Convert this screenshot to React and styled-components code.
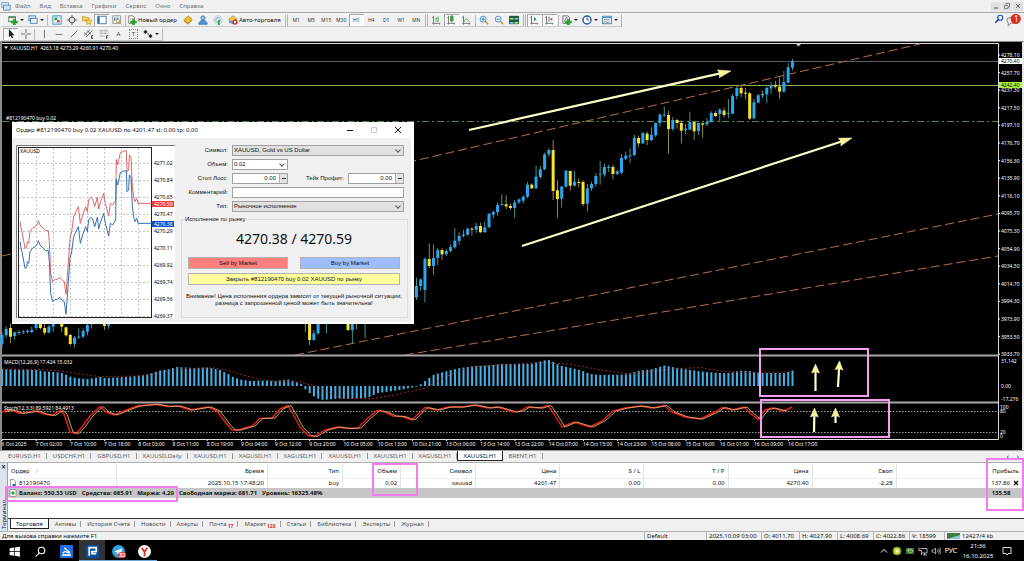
import React from 'react'
import styled, { createGlobalStyle, css } from 'styled-components'

const STEP = 4.273
const barX = (k) => 416.4 + STEP * k

// [up, high, top, bottom, low], three units to a pixel, first bar at index 0
const candles = [
  [1, 713, 738, 772, 780], [1, 716, 718, 738, 752], [1, 652, 657, 750, 787], [0, 610, 657, 678, 684],
  [1, 613, 654, 678, 705], [1, 625, 630, 654, 675], [0, 625, 630, 643, 660], [1, 628, 633, 643, 648],
  [1, 613, 621, 633, 637], [1, 564, 602, 622, 626], [1, 577, 588, 603, 613], [1, 569, 584, 588, 592],
  [1, 563, 566, 584, 588], [0, 562, 566, 569, 586], [1, 548, 558, 569, 579], [0, 548, 558, 577, 578],
  [1, 545, 562, 576, 579], [1, 520, 521, 562, 563], [1, 512, 516, 524, 535], [1, 488, 495, 516, 527],
  [1, 463, 492, 495, 497], [0, 466, 493, 499, 507], [0, 492, 498, 504, 510], [1, 480, 487, 504, 533],
  [1, 476, 478, 487, 492], [1, 466, 470, 482, 490], [1, 425, 434, 470, 474], [0, 430, 434, 445, 447],
  [1, 377, 410, 445, 447], [1, 377, 388, 411, 416], [1, 338, 343, 388, 390], [1, 325, 330, 343, 350],
  [0, 300, 330, 453, 480], [0, 421, 451, 477, 533], [1, 438, 440, 476, 502], [1, 390, 392, 440, 442],
  [0, 392, 393, 437, 452], [1, 393, 425, 437, 440], [0, 415, 426, 429, 441], [0, 421, 426, 492, 498],
  [1, 432, 445, 491, 515], [1, 425, 432, 445, 452], [1, 400, 408, 432, 440], [1, 363, 401, 404, 434],
  [1, 371, 381, 403, 410], [1, 374, 381, 384, 395], [0, 374, 381, 402, 418], [1, 390, 394, 402, 405],
  [1, 342, 354, 398, 403], [1, 335, 347, 356, 360], [1, 325, 346, 349, 369], [1, 284, 293, 345, 348],
  [0, 287, 294, 310, 322], [1, 276, 279, 310, 312], [0, 275, 281, 300, 315], [1, 262, 284, 300, 303],
  [1, 247, 249, 286, 291], [1, 220, 224, 249, 260], [1, 200, 224, 226, 230], [0, 213, 225, 267, 341],
  [1, 231, 240, 267, 272], [0, 236, 240, 249, 266], [0, 241, 249, 272, 310], [1, 252, 266, 270, 283],
  [1, 215, 246, 269, 271], [0, 245, 246, 274, 300], [1, 248, 249, 273, 285], [0, 248, 250, 254, 293],
  [1, 235, 246, 253, 258], [1, 214, 219, 246, 248], [0, 213, 219, 228, 231], [1, 205, 209, 222, 247],
  [0, 203, 212, 225, 232], [1, 177, 219, 222, 235], [1, 162, 168, 221, 223], [1, 140, 144, 168, 178],
  [0, 138, 144, 160, 172], [0, 144, 158, 160, 178], [0, 156, 160, 236, 240], [1, 176, 187, 235, 238],
  [1, 162, 166, 188, 189], [1, 153, 162, 166, 174], [1, 140, 144, 163, 190], [1, 126, 135, 145, 161],
  [0, 122, 135, 140, 146], [0, 113, 140, 155, 177], [1, 93, 126, 155, 157], [1, 70, 82, 128, 129],
  [1, 57, 63, 83, 90],
].map((c, i) => [i, ...c])

// older bars, with their own index
const oldCandles = [
  [-97, 1, 874, 885, 913, 926], [-96, 1, 860, 867, 886, 893], [-95, 0, 850, 864, 890, 910],
  [-94, 1, 875, 877, 888, 900], [-93, 1, 870, 876, 878, 885], [-92, 1, 870, 874, 877, 882],
  [-91, 1, 868, 873, 876, 880], [-90, 1, 860, 870, 876, 880], [-89, 1, 840, 850, 864, 870],
  [-88, 0, 840, 850, 864, 868], [-87, 0, 850, 864, 878, 885], [-86, 1, 855, 860, 878, 880],
  [-85, 1, 840, 850, 860, 876], [-83, 0, 840, 850, 860, 876], [-82, 0, 860, 862, 886, 890],
  [-81, 0, 882, 885, 912, 917], [-80, 1, 888, 893, 912, 922], [-79, 1, 865, 890, 893, 896],
  [-78, 1, 865, 873, 890, 894], [-77, 1, 850, 855, 875, 886], [-76, 1, 840, 850, 853, 865],
  [-73, 0, 850, 852, 858, 870], [-72, 1, 850, 852, 857, 866], [-26, 0, 840, 848, 852, 876],
  [-25, 0, 850, 852, 900, 915], [-24, 1, 870, 880, 900, 902], [-23, 1, 850, 852, 880, 885],
  [-21, 1, 840, 845, 850, 880], [-16, 0, 850, 852, 870, 873], [-15, 1, 850, 852, 870, 910],
  [-14, 0, 840, 845, 850, 868], [-12, 1, 840, 845, 850, 894],
]

const macd = [
  [0, 369], [20, 369.5], [38, 370], [45, 371.5], [55, 372], [62, 373], [67, 375], [71, 377], [80, 378.5],
  [88, 379], [93, 378], [100, 377], [105, 378], [125, 377], [145, 375], [152, 373], [160, 370.5], [170, 369],
  [177, 367], [195, 368], [208, 367.5], [220, 370], [228, 374], [233, 377], [240, 379.5], [250, 381],
  [260, 380.5], [275, 381], [289, 379.5], [297, 382.5], [302, 384.5], [305, 389], [310, 393.5], [316, 398],
  [323, 400], [340, 398.5], [350, 399], [368, 397.5], [378, 393], [393, 391], [405, 389], [412, 387.5],
  [418, 386.5], [421, 384], [427, 379.5], [433, 375], [445, 371.5], [460, 368], [475, 366], [490, 365.5],
  [500, 364], [530, 364], [548, 359.5], [560, 365.5], [580, 370], [590, 374], [600, 375], [625, 374.5],
  [640, 370.5], [653, 369], [664, 365.5], [675, 367.5], [690, 370], [705, 372], [720, 373], [730, 373],
  [740, 370.5], [750, 371], [757, 373], [785, 373], [800, 368],
]

const signal = [
  [2, 369], [40, 369.5], [60, 371], [80, 374], [100, 376.5], [140, 376], [165, 372], [185, 368.5], [215, 368],
  [230, 371], [250, 377], [270, 381], [300, 382], [315, 386], [325, 391], [340, 398], [370, 399], [395, 395],
  [425, 388], [445, 377], [470, 367], [500, 365], [540, 362.5], [570, 364], [600, 370], [630, 374],
  [670, 369], [700, 367.5], [720, 371], [740, 372.5], [792, 372],
]

const stoch = [
  [2, 412], [8, 410], [14, 411], [20, 413.5], [36, 411], [44, 414], [52, 415.5], [60, 410.5], [64, 414],
  [70, 432], [76, 433.5], [82, 427], [90, 416], [100, 406.5], [106, 412], [114, 415], [124, 411], [137, 406],
  [155, 404.3], [168, 406.5], [178, 406], [190, 410], [208, 407], [217, 411], [226, 423], [232, 430],
  [238, 430], [252, 426], [260, 418.5], [272, 418], [280, 409], [288, 405.5], [293, 414], [300, 427],
  [308, 435.5], [314, 436.5], [325, 430], [337, 427], [348, 428.5], [358, 428], [368, 418], [377, 410.5],
  [385, 412], [393, 416], [402, 416.5], [412, 420], [425, 407.5], [437, 410], [448, 407], [462, 407],
  [474, 405], [488, 408], [497, 407], [514, 412], [520, 411], [527, 407], [540, 408], [548, 405.5],
  [554, 414], [562, 427], [574, 422], [590, 427], [602, 421], [613, 411], [625, 408], [640, 406],
  [652, 408], [664, 405.5], [672, 412], [685, 417], [700, 419], [715, 412], [722, 407.5], [732, 410],
  [744, 407], [750, 413], [758, 419.5], [765, 410], [772, 408], [784, 411], [792, 407],
]

const ticks = [
  [61, 335], [62, 350], [66, 365], [75, 415], [80, 412], [82, 395], [86, 400], [90, 365], [97, 355], [106, 350],
  [113, 340], [115, 332], [120, 345], [130, 355], [137, 362], [145, 362], [148, 395], [152, 490], [158, 515],
  [163, 510], [172, 508], [180, 502], [188, 512], [193, 515], [198, 553], [204, 470], [210, 385], [215, 365],
  [221, 320], [235, 290], [241, 340], [248, 315], [257, 290], [262, 305], [266, 270], [272, 262], [278, 267],
  [284, 290], [292, 262], [296, 297], [302, 275], [311, 250], [316, 280], [326, 318], [331, 280], [338, 285],
  [347, 270], [349, 148], [353, 165], [361, 128], [367, 124], [379, 122], [381, 185], [386, 180], [388, 135],
  [393, 140], [397, 230], [402, 265], [405, 275], [410, 265], [414, 280], [456, 280],
]

const prices = ['4278.10', '4257.70', '4237.30', '4217.50', '4197.10', '4176.70', '4156.30', '4135.90', '4116.10',
  '4095.70', '4075.30', '4054.90', '4034.50', '4014.70', '3994.30', '3973.90', '3953.50', '3933.70']

const times = ['6 Oct 2025', '7 Oct 02:00', '7 Oct 10:00', '7 Oct 18:00', '8 Oct 03:00', '8 Oct 11:00', '8 Oct 19:00',
  '9 Oct 04:00', '9 Oct 12:00', '9 Oct 20:00', '10 Oct 05:00', '10 Oct 13:00', '10 Oct 21:00', '13 Oct 06:00',
  '13 Oct 14:00', '13 Oct 22:00', '14 Oct 07:00', '14 Oct 15:00', '14 Oct 23:00', '15 Oct 08:00', '15 Oct 16:00',
  '16 Oct 01:00', '16 Oct 09:00', '16 Oct 17:00']

const tickPrices = ['4271.02', '4270.84', '4270.65', '4270.47', '4270.29', '4270.11', '4269.92', '4269.74', '4269.56', '4269.37']

const line = (pts) => pts.map((p) => p.join(',')).join(' ')

function valueAt(pts, x) {
  const i = pts.findIndex((p) => p[0] > x)
  const [x0, y0] = pts[i - 1]
  const [x1, y1] = pts[i]
  return y0 + ((y1 - y0) * (x - x0)) / (x1 - x0)
}

function Arrow({ from, to, head = 9, half = 4, width = 2.2 }) {
  const [x0, y0] = from
  const [x1, y1] = to
  const len = Math.hypot(x1 - x0, y1 - y0)
  const angle = (Math.atan2(y1 - y0, x1 - x0) * 180) / Math.PI
  return (
    <g transform={`translate(${x0} ${y0}) rotate(${angle})`}>
      <line x1='0' y1='0' x2={len - head + 2} y2='0' stroke='#ffffc8' strokeWidth={width} />
      <path d={`M${len} 0L${len - head} ${-half}l1.500 ${half}l-1.500 ${half}z`} fill='#fbf68e' stroke='#ffffd0' strokeWidth='.5' />
    </g>
  )
}

function PriceChart() {
  return (
    <ChartSvg viewBox='0 42 1024 408' role='img' aria-label='XAUUSD H1'>
      <rect x='0' y='42' width='1024' height='408' fill='#000' />
      <rect x='0' y='42' width='2' height='408' fill='#8c8c8c' />
      <rect x='1022' y='42' width='2' height='408' fill='#e8e8e8' />
      <path d='M2 43.5H998.5V439.5H2' fill='none' stroke='#dcdcdc' />
      <path d='M796 44h5l-2.5 2.5z' fill='#ccc' />

      <path d='M2 61.5H998' stroke='#5c5c66' />
      <path d='M2 85.5H998' stroke='#84b450' />
      <path d='M2 121.5H998' stroke='#4d8a52' strokeDasharray='7 3 2 3' />
      <g stroke='#b87040' strokeDasharray='9 4' strokeWidth='1'>
        <path d='M2 256L920 44' />
        <path d='M295 355L998 214' />
        <path d='M405 355L998 256' />
      </g>

      {[...oldCandles, ...candles].map(([k, up, high, top, bottom, low]) => (
        <g key={k}>
          <rect x={barX(k) - 0.4} y={40 + high / 3} width='.8' height={(low - high) / 3} fill={up ? '#4fb9b4' : '#b9ac4c'} />
          <rect x={barX(k) - 1.5} y={40 + top / 3} width='3' height={Math.max(1, (bottom - top) / 3)} fill={up ? '#2ba6f0' : '#f8e32c'} />
        </g>
      ))}

      <Arrow from={[469, 130]} to={[731, 71]} head={13} half={4} />
      <Arrow from={[522, 246]} to={[852, 138]} head={13} half={4} />

      {/* MACD */}
      <path d='M2 355.5H998' stroke='#a8a8a8' strokeWidth='2' />
      {Array.from({ length: 186 }, (_, i) => {
        const x = barX(i - 97)
        const y = valueAt(macd, x)
        return <rect key={i} x={x - 0.9} y={Math.min(y, 386)} width='2' height={Math.abs(386 - y)} fill='#44b0e4' />
      })}
      <polyline points={line(signal)} fill='none' stroke='#a82c2c' strokeDasharray='2 2' strokeWidth='.9' />

      {/* Stochastic */}
      <path d='M2 402.5H998' stroke='#a8a8a8' strokeWidth='2' />
      <path d='M2 411.5H998M2 432.5H998' stroke='#a0a0a0' strokeDasharray='1.5 1.5' />
      <polyline points={line(stoch)} fill='none' stroke='#f01c14' strokeWidth='1.4' strokeLinejoin='round' />
      <polyline points={line(stoch.slice(0, -1).map(([x, y]) => [x + 3, y]))} fill='none' stroke='#c8b878' strokeWidth='.9' strokeLinejoin='round' />

      <g fill='#fff' fontSize='5'>
        <path d='M4 46.5h4l-2 2.5z' />
        <text x='10' y='50'>XAUUSD,H1&nbsp; 4263.18 4273.29 4260.91 4270.40</text>
        <text x='6' y='120'>#812190470 buy 0.02</text>
        <text x='4' y='363.5'>MACD(12,26,9) 17.424 15.032</text>
        <text x='4' y='410'>Stoch(12,3,3) 89.5921 84.4913</text>
        {prices.map((p, i) => <text key={p} x='1001' y={57 + i * 17.6}>{p}</text>)}
        {prices.map((p, i) => <rect key={p} x='998' y={54.5 + i * 17.6} width='2' height='1' />)}
        <text x='1001' y='363'>31.142</text>
        <text x='1001' y='388'>0.00</text>
        <text x='1001' y='400.5'>-17.276</text>
        <text x='1000' y='409'>100</text>
        <text x='1000' y='413'>80</text>
        <text x='1000' y='434'>20</text>
        <text x='1000' y='438'>0</text>
        {times.map((t, i) => <text key={t} x={1.5 + i * 34.2} y='446'>{t}</text>)}
        {times.map((t, i) => <rect key={t} x={1.5 + i * 34.2} y='440' width='1' height='1' />)}
        <rect x='999' y='58' width='23' height='6' />
        <rect x='999' y='82' width='23' height='6' fill='#adf53c' />
      </g>
      <g fill='#000' fontSize='5'>
        <text x='1001' y='63'>4270.40</text>
        <text x='1001' y='87'>4242.40</text>
      </g>

      <g fill='none' stroke='#f5a0f3' strokeWidth='2'>
        <rect x='760' y='349' width='108' height='47' />
        <rect x='761' y='400' width='128' height='37' />
      </g>
      <Arrow from={[815.5, 391]} to={[815.5, 364]} />
      <Arrow from={[838, 387]} to={[839.5, 361]} />
      <Arrow from={[814, 432]} to={[814.5, 408]} />
      <Arrow from={[835.5, 423]} to={[835.5, 408]} />
    </ChartSvg>
  )
}

function TickChart() {
  const red = ticks.map(([x, y]) => [x / 3, 110 + y / 3])
  const blue = red.map(([x, y]) => [x, y + 20])
  return (
    <TickSvg viewBox='16 145 159 173' role='img' aria-label='XAUUSD ticks'>
      <rect x='16' y='145' width='159' height='173' fill='#fff' />
      <path d='M16.5 318V145.5H175' fill='none' stroke='#777' />
      <path d='M36.5 148V317M53.5 148V317M70.5 148V317M87.5 148V317M104.5 148V317M121.5 148V317M138.5 148V317' stroke='#c4c4c4' strokeDasharray='2 2' />
      {tickPrices.map((p, i) => <path key={p} d={`M19 ${163.5 + i * 17}H152`} stroke='#c4c4c4' strokeDasharray='2 2' />)}
      <rect x='18.5' y='147.5' width='133' height='170' fill='none' stroke='#222' />
      <polyline points={line(red)} fill='none' stroke='#d45858' strokeWidth='.9' />
      <polyline points={line(blue)} fill='none' stroke='#1f5fa8' strokeWidth='.9' />
      <g fontSize='5'>
        <text x='20' y='153'>XAUUSD</text>
        {tickPrices.map((p, i) => <text key={p} x='154' y={165 + i * 17}>{p}</text>)}
        <rect x='152' y='201' width='22' height='6' fill='#f03c3c' />
        <rect x='152' y='221' width='22' height='6' fill='#0b50c8' />
        <text x='154' y='206' fill='#fff'>4270.59</text>
        <text x='154' y='226' fill='#fff'>4270.38</text>
      </g>
    </TickSvg>
  )
}

// toolbar drawings, all on a 12 x 12 grid
const plus = <path d='M6.5 5h2.4v2.4h2.4v2.3H8.900v2.300H6.500V9.700H4.100V7.400h2.400z' fill='#1fb32a' stroke='#0a7a14' strokeWidth='.5' />
const axes = <path d='M3 1v9h8M1.500 3h1.500M1.500 10h1.500v1.500M10 10v1.500' fill='none' stroke='#555' strokeWidth='.9' />
const icons = {
  app: <g><rect x='1' y='2' width='8' height='6' fill='#dceaf8' stroke='#6a9cc8' /><rect x='3' y='5' width='8' height='6' fill='#cfe0f2' stroke='#5a8ab8' /></g>,
  newChart: <g><rect x='1' y='2' width='8' height='6' fill='#e8f2e8' stroke='#3c7c50' /><path d='M1 3h8' stroke='#3c7c50' />{plus}</g>,
  profiles: <g><rect x='1' y='1' width='8' height='6' fill='#cfe4f6' stroke='#4880b0' /><rect x='3' y='4' width='8' height='6' fill='#e6f1fb' stroke='#4880b0' /></g>,
  market: <g><rect x='1' y='1' width='10' height='10' fill='#d8ecfa' stroke='#3c88b8' /><path d='M3 3h3v3H3z' fill='#27a33a' /><path d='M6 6h3v3H6z' fill='#d8443c' /></g>,
  data: <g fill='none' stroke='#444'><circle cx='6' cy='6' r='3.500' /><path d='M6 0v4M6 8v4M0 6h4M8 6h4' /></g>,
  navigator: <g><path d='M0 2h4l1 1h3v4H0z' fill='#f3cf62' stroke='#b58a1a' strokeWidth='.7' /><path d='M8 4l1.200 2.500 2.800.3-2 1.900.5 2.800L8 10.200 5.500 11.500l.5-2.800-2-1.900 2.800-.3z' fill='#ffd83c' stroke='#a87c10' strokeWidth='.6' /></g>,
  terminal: <g><rect x='1' y='1.500' width='10' height='9' fill='#fff' stroke='#2c6cb0' /><path d='M2 2v8' stroke='#2c6cb0' strokeWidth='2.500' /></g>,
  tester: <g><rect x='1' y='1' width='9' height='9' fill='#f4f4f4' stroke='#888' /><path d='M3 3v4M5 3v3M7 3v3' stroke='#3b78b8' /><circle cx='7' cy='7' r='2' fill='none' stroke='#b58a1a' /><path d='M8.500 8.500l3 3' stroke='#b58a1a' /></g>,
  order: <g><path d='M2 1h5l2 2v7H2z' fill='#fff' stroke='#777' /><path d='M3.500 4h4M3.500 6h3' stroke='#999' strokeWidth='.7' />{plus}</g>,
  editor: <g><path d='M6 1l5 4-5 5-5-4z' fill='#f2c22c' stroke='#9c7410' strokeWidth='.8' /><path d='M1 7l5 4 5-5' fill='none' stroke='#9c7410' /></g>,
  person: <g><circle cx='6' cy='3.500' r='2.500' fill='#9ccbf0' stroke='#2c6ca8' /><path d='M1 11c0-6 10-6 10 0z' fill='#4c98dc' stroke='#2c6ca8' /></g>,
  signals: <g fill='none'><circle cx='6' cy='6' r='5' stroke='#9cc4dc' /><circle cx='6' cy='6' r='2.800' stroke='#58a0c8' /><path d='M7 6v6' stroke='#27a33a' strokeWidth='2' /></g>,
  auto: <g><path d='M1 5l5-4 5 4-5 3z' fill='#f2c84c' stroke='#9c7410' strokeWidth='.7' /><path d='M1 6v3l5 2V8z' fill='#5c9cd8' /><circle cx='8.500' cy='8.500' r='3.200' fill='#e0281c' /><rect x='7.200' y='7.200' width='2.600' height='2.600' fill='#fff' /></g>,
  bars: <g>{axes}<path d='M6 3v5M6 4h1.500M8.500 2v6M7.500 7h1' stroke='#2c9c3c' fill='none' /></g>,
  candles: <g>{axes}<path d='M7 0v9' stroke='#14781e' /><rect x='5.500' y='2' width='3' height='5' fill='#22b432' stroke='#14781e' strokeWidth='.6' /></g>,
  curve: <g>{axes}<path d='M4 8c1-4 3-4 6 0' stroke='#2c9c3c' fill='none' /></g>,
  zoomIn: <g fill='none'><path d='M7.500 7.500l3.500 3.500' stroke='#c89c28' strokeWidth='2' /><circle cx='5' cy='5' r='3.600' fill='#e6f3fc' stroke='#3c84c0' /><path d='M3 5h4M5 3v4' stroke='#2870b0' /></g>,
  zoomOut: <g fill='none'><path d='M7.500 7.500l3.500 3.500' stroke='#c89c28' strokeWidth='2' /><circle cx='5' cy='5' r='3.600' fill='#e6f3fc' stroke='#3c84c0' /><path d='M3 5h4' stroke='#2870b0' /></g>,
  tile: <g><rect x='0' y='1' width='12' height='10' fill='#1c5c3c' /><path d='M1 3.500h4.500v2H1zM6.500 8.500H11v2H6.500z' fill='#a8e068' /><path d='M6.500 3.500H11v2H6.500zM1 8.500h4.500v2H1z' fill='#88b8ec' /></g>,
  scroll: <g>{axes}<path d='M6 2.500v5l3-2.500z' fill='#2c9c3c' /></g>,
  shift: <g>{axes}<path d='M6 2v6' stroke='#555' /><path d='M10 3v4L7 5z' fill='#c84c3c' /></g>,
  indicators: <g><path d='M1 1h6l2 2v7H1z' fill='#f2f2f2' stroke='#666' /><path d='M3 8c2-6 2-6 4-4' stroke='#555' fill='none' />{plus}</g>,
  clock: <g><circle cx='6' cy='6' r='4.800' fill='#fff' stroke='#1f5aa8' strokeWidth='1.800' /><path d='M6 3v3h2.500' stroke='#333' fill='none' /></g>,
  template: <g><rect x='.5' y='1.500' width='11' height='9' fill='#e4f0fa' stroke='#3c7cb0' /><path d='M1 3h10' stroke='#3c7cb0' /><path d='M2 6l2-1 2 1 3-1M2 9l2-1 2 1 3-1' stroke='#777' fill='none' /></g>,
  cursor: <path d='M3.500 0v10l2.200-2 1.500 3.500 1.600-.7L7.200 7.500h3z' fill='#222' />,
  cross: <path d='M6 0v5M6 7v5M0 6h5M7 6h5' stroke='#555' />,
  vline: <path d='M6.500 1v10' stroke='#555' />,
  hline: <path d='M2 6.500h8' stroke='#555' />,
  tline: <path d='M2 10l8-8' stroke='#555' />,
  channel: <g stroke='#555' fill='none'><path d='M0 8l7-7M2 10l8-8M0 4l4 4M4 2l4 4' /><path d='M11 8H9v3.500h2M9 9.800h1.500' stroke='#333' /></g>,
  fibo: <g stroke='#888' fill='none'><path d='M1 1.500h10M1 3.500h10M1 5.500h10M1 8.500h6' strokeDasharray='1 .6' /><path d='M11 8H9v4M9 9.800h1.500' stroke='#333' /></g>,
  shapes: <g fill='#222'><path d='M3 1l2.500 2.500L3 6 .5 3.500zM9 6l2.500 2.500L9 11 6.500 8.500z' /><path d='M5 6l1.500-1.500v3z' /></g>,
  search: <g fill='none' stroke='#2454a0' strokeWidth='1.400'><circle cx='7.500' cy='4.500' r='3' /><path d='M5.500 6.500l-4 4' strokeWidth='2' /></g>,
}

const Icon = ({ name }) => <IconSvg viewBox='0 0 12 12' aria-hidden='true'>{icons[name]}</IconSvg>

function Tool({ name, menu, on, children }) {
  return (
    <ToolButton $on={on} $menu={menu} aria-label={name}>
      {name && <Icon name={name} />}
      {children}
      {menu && <Caret />}
    </ToolButton>
  )
}

const menuItems = ['Файл', 'Вид', 'Вставка', 'Графики', 'Сервис', 'Окно', 'Справка']
const frames = ['M1', 'M5', 'M15', 'M30', 'H1', 'H4', 'D1', 'W1', 'MN']
const chartTabs = ['EURUSD,H1', 'USDCHF,H1', 'GBPUSD,H1', 'XAUUSD,Daily', 'XAUUSD,H1', 'XAGUSD,H1', 'XAGUSD,H1',
  'XAUUSD,H1', 'XAUUSD,H1', 'XAGUSD,H1', 'XAUUSD,H1', 'BRENT,H1']
const terminalTabs = [['Торговля'], ['Активы'], ['История Счета'], ['Новости'], ['Алерты'], ['Почта', 17],
  ['Маркет', 120], ['Статьи'], ['Библиотека'], ['Эксперты'], ['Журнал']]
const columns = [
  ['Ордер', 108], ['Время', 151], ['Тип', 75], ['Объем', 58], ['Символ', 75], ['Цена', 84],
  ['S / L', 84], ['T / P', 84], ['Цена', 84], ['Своп', 84], ['Прибыль', 127],
]

function OrderDialog() {
  return (
    <Dialog role='dialog' aria-label='Ордер'>
      <DialogTitle>
        <span>Ордер #812190470 buy 0.02 XAUUSD по 4201.47 sl: 0.00 tp: 0.00</span>
        <TitleButton aria-label='Свернуть'><svg viewBox='0 0 8 8'><path d='M1 4.500h6' stroke='#111' /></svg></TitleButton>
        <TitleButton aria-label='Развернуть'><svg viewBox='0 0 8 8'><path d='M1.500 1.500h5v5h-5z' fill='none' stroke='#ccc' /></svg></TitleButton>
        <TitleButton aria-label='Закрыть'><svg viewBox='0 0 8 8'><path d='M1 1l6 6M7 1L1 7' stroke='#111' /></svg></TitleButton>
      </DialogTitle>
      <DialogBody>
        <TickChart />
        <Form>
          <Fields>
            <label htmlFor='symbol'>Символ:</label>
            <SelectBox $wide><select id='symbol'><option>XAUUSD, Gold vs US Dollar</option></select></SelectBox>
            <label htmlFor='volume'>Объем:</label>
            <SelectBox><select id='volume'><option>0.02</option></select></SelectBox>
            <label htmlFor='sl'>Стоп Лосс:</label>
            <Spin><input id='sl' defaultValue='0.00' /><i /></Spin>
            <label htmlFor='tp'>Тейк Профит:</label>
            <Spin><input id='tp' defaultValue='0.00' /><i /></Spin>
            <label htmlFor='comment'>Комментарий:</label>
            <Comment id='comment' />
            <label htmlFor='type'>Тип:</label>
            <SelectBox $wide><select id='type'><option>Рыночное исполнение</option></select></SelectBox>
          </Fields>
          <Group>
            <legend>Исполнение по рынку</legend>
            <Quote>4270.38 / 4270.59</Quote>
            <DealRow>
              <DealButton $color='#ff7f7f'>Sell by Market</DealButton>
              <DealButton $color='#9dbdff'>Buy by Market</DealButton>
            </DealRow>
            <DealButton $color='#ffff9c'>Закрыть #812190470 buy 0.02 XAUUSD по рынку</DealButton>
            <Warning>Внимание! Цена исполнения ордера зависит от текущей рыночной ситуации,<br />разница с запрошенной ценой может быть значительна!</Warning>
          </Group>
        </Form>
      </DialogBody>
    </Dialog>
  )
}

function Terminal() {
  return (
    <TerminalPanel>
      <Side><button aria-label='Закрыть терминал'>×</button><span>Терминал</span></Side>
      <TerminalMain>
        <Orders>
          <colgroup>{columns.map(([name, w], i) => <col key={i} style={{ width: `${w / 10.14}%` }} />)}</colgroup>
          <thead>
            <tr>{columns.map(([name], i) => <th key={i}>{name}{i === 0 && <Slash>/</Slash>}</th>)}</tr>
          </thead>
          <tbody>
            <tr>
              <td><RowIcon viewBox='0 0 8 8'><path d='M1.500.5h3l2 2v5h-5z' fill='#fff' stroke='#777' strokeWidth='.7' /><path d='M3.500 7.500V5h3v2.500z' fill='#2c6cb8' /></RowIcon>812190470</td>
              <td>2025.10.15 17:48:20</td><td>buy</td><td>0.02</td><td>xauusd</td><td>4201.47</td>
              <td>0.00</td><td>0.00</td><td>4270.40</td><td>-2.28</td>
              <td>137.86<CloseOrder aria-label='Закрыть ордер'><svg viewBox='0 0 6 6'><path d='M1 1l4 4M5 1L1 5' stroke='#000' strokeWidth='1.300' /></svg></CloseOrder></td>
            </tr>
            <Balance>
              <td colSpan='10'>
                <Totals>
                  <RowIcon viewBox='0 0 8 8'><rect x='1' y='.5' width='6' height='7' rx='1' fill='#fff' stroke='#777' strokeWidth='.7' /><circle cx='4' cy='4' r='1.700' fill='#2c9c3c' /></RowIcon>
                  <span>Баланс: 550.33 USD</span>
                  <span>Средства: 685.91</span>
                  <span>Маржа: 4.20</span>
                  <span>Свободная маржа: 681.71</span>
                  <span>Уровень: 16325.48%</span>
                </Totals>
              </td>
              <td>135.58</td>
            </Balance>
          </tbody>
        </Orders>
        <TerminalTabs>
          {terminalTabs.map(([name, count], i) => (
            <TermTab key={name} $on={i === 0}>{name}{count && <small>{count}</small>}</TermTab>
          ))}
        </TerminalTabs>
      </TerminalMain>
      <Mark $left='5px' $top='23px' $width='173px' $height='16px' />
      <Mark $left='372px' $top='0px' $width='46px' $height='33px' />
      <Mark $right='0px' $top='-5px' $width='38px' $height='53px' />
    </TerminalPanel>
  )
}

function Taskbar() {
  return (
    <Bar>
      <Task aria-label='Пуск'><svg viewBox='0 0 12 12'><path d='M1.500 3l4-.6v3.400h-4zM6.200 2.300l4.800-.8v4.300H6.200zM1.500 6.500h4v3.400l-4-.6zM6.200 6.500H11v4.300l-4.800-.8z' fill='#fff' /></svg></Task>
      <Task aria-label='Поиск'><svg viewBox='0 0 12 12'><circle cx='7' cy='5' r='3' fill='none' stroke='#fff' /><path d='M5 7.200L1.500 10.700' stroke='#fff' /></svg></Task>
      <Task aria-label='Диск'><svg viewBox='0 0 12 12'><rect width='12' height='12' fill='#1f6fe0' /><path d='M4 2.500l5 4.500M2.500 7.500l2-1.500 4.500 1.500' stroke='#fff' fill='none' strokeWidth='1.200' /><path d='M2 8.500h8v1.500H2z' fill='#fff' /></svg></Task>
      <Task aria-label='Терминал' $open $on><svg viewBox='0 0 12 12'><rect width='12' height='12' fill='#0d4c94' /><path d='M3 10V2.500h6.500V6H5.500v2h4' fill='none' stroke='#fff' strokeWidth='1.600' /></svg></Task>
      <Task aria-label='Telegram' $open>
        <svg viewBox='0 0 12 12'><circle cx='6' cy='6' r='6' fill='#2fa3dc' /><path d='M2 6l7.500-3L8.300 9.500 5.500 7.500 4.800 9l-.5-2.300z' fill='#fff' /></svg>
        <Count>32</Count>
      </Task>
      <Task aria-label='Яндекс' $open><svg viewBox='0 0 12 12'><circle cx='6' cy='6' r='6' fill='#fff' /><path d='M3.500 2.500L6 6.500l2.500-4M6 6v4.500' fill='none' stroke='#e8281c' strokeWidth='1.600' /></svg></Task>
      <Tray>
        <svg viewBox='0 0 10 10'><path d='M2 6.500l3-3 3 3' fill='none' stroke='#fff' /></svg>
        <svg viewBox='0 0 10 10'><circle cx='5' cy='5' r='4' fill='#d8d020' stroke='#4c9c30' /><circle cx='5' cy='5' r='1.500' fill='#fff' /></svg>
        <svg viewBox='0 0 10 10'><rect x='1' y='2' width='8' height='6' fill='#3f7a28' /><path d='M2 5c2-3 5-2 6 0-2 2-4 2-5 0 1-1 2-1 3 0' fill='none' stroke='#cfe8c0' strokeWidth='.7' /></svg>
        <svg viewBox='0 0 10 10'><path d='M2.500 2.500H9v4.500H4M5 9h4M6.500 7v2M1 1.500v3h2.500V9' fill='none' stroke='#ddd' strokeWidth='.8' /></svg>
        <svg viewBox='0 0 10 10'><path d='M1 4v2h1.500L4.500 8V2L2.500 4zM6 3.500c1 1 1 2 0 3M7.300 2.500c1.600 1.600 1.600 3.400 0 5M8.500 1.500c2 2 2 5 0 7' fill='none' stroke='#ddd' strokeWidth='.7' /></svg>
        <Lang>РУС</Lang>
        <Clock><span>21:36</span><span>16.10.2025</span></Clock>
        <svg viewBox='0 0 10 10'><path d='M1 1.500h8v6H6l-1 1.500-1-1.500H1z' fill='none' stroke='#ddd' /></svg>
      </Tray>
    </Bar>
  )
}

function App() {
  return (
    <Page>
      <GlobalStyle />
      <MenuBar>
        <Icon name='app' />
        {menuItems.map((m) => <button key={m}>{m}</button>)}
        <WindowButtons>
          <button aria-label='Свернуть'><svg viewBox='0 0 8 8'><path d='M2 6h4' stroke='#555' /></svg></button>
          <button aria-label='Восстановить'><svg viewBox='0 0 8 8'><path d='M1.500 3.500h3.500v3H1.500zM3 3V1.500h3.500V5H5' fill='none' stroke='#888' /></svg></button>
          <button aria-label='Закрыть'><svg viewBox='0 0 8 8'><path d='M2 2l4 4M6 2L2 6' stroke='#666' /></svg></button>
        </WindowButtons>
      </MenuBar>
      <Toolbar>
        <ToolGroup>
          <Gap />
          <Tool name='newChart' menu /><Tool name='profiles' menu /><Divider />
          <Tool name='market' /><Tool name='data' /><Tool name='navigator' /><Tool name='terminal' on /><Tool name='tester' /><Divider />
          <Tool name='order'>Новый ордер</Tool><Gap />
          <Tool name='editor' /><Tool name='person' /><Tool name='signals' /><Gap /><Tool name='auto'>Авто-торговля</Tool><Gap />
        </ToolGroup>
        <ToolGroup>
          {frames.map((f) => <FrameButton key={f} $on={f === 'H1'}>{f}</FrameButton>)}
        </ToolGroup>
        <ToolGroup>
          <Tool name='bars' /><Tool name='candles' on /><Tool name='curve' /><Divider />
          <Tool name='zoomIn' /><Tool name='zoomOut' /><Tool name='tile' />
        </ToolGroup>
        <ToolGroup>
          <Tool name='scroll' on /><Tool name='shift' on /><Divider />
          <Tool name='indicators' menu /><Tool name='clock' menu /><Tool name='template' menu />
        </ToolGroup>
        <ToolEnd>
          <Tool name='search' />
          <Bell aria-label='Сообщения'><svg viewBox='0 0 14 12'><path d='M1 6c0-3 8-3 8 0s-4 3-5 3l-2 2V8.500C1 8 1 7 1 6z' fill='#eee' stroke='#999' /><circle cx='8.500' cy='5' r='4.500' fill='#dc2c1c' /><text x='7' y='7.500' fontSize='7' fill='#fff'>1</text></svg></Bell>
        </ToolEnd>
      </Toolbar>
      <Toolbar>
        <ToolGroup>
          <Tool name='cursor' on /><Tool name='cross' /><Divider />
          <Tool name='vline' /><Tool name='hline' /><Tool name='tline' /><Tool name='channel' /><Tool name='fibo' />
          <FrameButton $big>A</FrameButton><FrameButton $big><BoxedT>T</BoxedT></FrameButton><Tool name='shapes' menu />
        </ToolGroup>
      </Toolbar>
      <ChartArea>
        <PriceChart />
        <OrderDialog />
      </ChartArea>
      <ChartTabs>
        {chartTabs.map((t, i) => <ChartTab key={i} $on={i === 10}>{t}</ChartTab>)}
        <Scroller><button aria-label='Назад'>‹</button><button aria-label='Вперёд'>›</button></Scroller>
      </ChartTabs>
      <Terminal />
      <Status>
        <StatusCell $grow>Для вызова справки нажмите F1</StatusCell>
        <StatusCell $w='62px'>Default</StatusCell>
        <StatusCell $w='55px'>2025.10.09 03:00</StatusCell>
        <StatusCell $w='38px'>O: 4011.70</StatusCell>
        <StatusCell $w='38px'>H: 4027.90</StatusCell>
        <StatusCell $w='36px'>L: 4008.69</StatusCell>
        <StatusCell $w='36px'>C: 4022.86</StatusCell>
        <StatusCell $w='35px'>V: 18599</StatusCell>
        <StatusCell $w='80px'><svg viewBox='0 0 13 6'><rect width='13' height='6' fill='#3c7c3c' /><path d='M0 6l13-4v4z' fill='#8cc8e0' /></svg>12427/4 kb</StatusCell>
      </Status>
      <Taskbar />
    </Page>
  )
}

export default App

const GlobalStyle = createGlobalStyle`
  *{ box-sizing:border-box; }
  body{
    margin:0;
    background:#000;
    color:#111;
    font-family:'Noto Sans', sans-serif;
    font-size:6px;
    line-height:8px;
  }
  button, input, select{
    font:inherit;
    color:inherit;
    border:0;
    padding:0;
    margin:0;
    background:none;
    border-radius:0;
  }
  svg text{ font-family:'Noto Sans', sans-serif; }
`
const Page = styled.div`
  min-height:100vh;
  display:flex;
  flex-direction:column;
  background:#f0f0f0;
`
const IconSvg = styled.svg`
  width:10px;
  height:10px;
  flex:none;
`
const MenuBar = styled.header`
  height:13px;
  display:flex;
  align-items:center;
  gap:9px;
  padding:0 0 0 1px;
  border-bottom:1px solid #a8a8a8;
  color:#707070;
  > svg{ margin-right:-5px; }
`
const WindowButtons = styled.div`
  margin-left:auto;
  display:flex;
  gap:1px;
  padding-right:1px;
  button{
    width:10px;
    height:9px;
    background:#e0e0e4;
    display:flex;
    justify-content:center;
    align-items:center;
  }
  svg{ width:8px; height:8px; }
`
const Toolbar = styled.div`
  height:14px;
  display:flex;
  align-items:center;
  & + &{ height:15px; border-bottom:1px solid #8a8a8a; }
`
const ToolGroup = styled.div`
  height:13px;
  display:flex;
  align-items:center;
  padding:0 1px;
  margin-left:1px;
  border:1px solid #fafafa;
  border-right-color:#b4b4b4;
  border-bottom-color:#c8c8c8;
  & + &{
    margin-left:1px;
    border-left-color:#b4b4b4;
  }
`
const ToolEnd = styled.div`
  margin-left:auto;
  display:flex;
`
const pressed = css`
  background:#f8f8f8;
  box-shadow:inset 1px 1px 0 #a8a8a8, inset -1px -1px 0 #fff;
`
const ToolButton = styled.button`
  min-width:15px;
  height:12px;
  display:flex;
  align-items:center;
  justify-content:center;
  gap:1px;
  padding:${(p) => (p.$menu ? '0 2px' : '0')};
  white-space:nowrap;
  ${(p) => p.$on && pressed}
`
const Caret = styled.i`
  margin-left:1px;
  border:2px solid transparent;
  border-top-color:#222;
  border-bottom:0;
`
const FrameButton = styled.button`
  width:15px;
  height:12px;
  font-size:${(p) => (p.$big ? '6px' : '5px')};
  color:#333;
  ${(p) => p.$on && pressed}
`
const BoxedT = styled.span`
  border:1px dotted #888;
  padding:0 2px;
`
const Divider = styled.i`
  width:1px;
  height:11px;
  margin:0 1px;
  background:#b8b8b8;
`
const Gap = styled.i`
  width:3px;
`
const Bell = styled.button`
  width:18px;
  height:14px;
  svg{ width:16px; height:14px; display:block; }
`
const ChartArea = styled.main`
  position:relative;
`
const ChartSvg = styled.svg`
  display:block;
  width:100%;
`
const Dialog = styled.section`
  position:absolute;
  left:12px;
  top:80px;
  width:402px;
  background:#f0f0f0;
  border:1px solid #fff;
  border-width:0 3px 2px 0;
`
const DialogTitle = styled.header`
  height:16px;
  display:flex;
  align-items:center;
  background:#fff;
  padding:0 1px 0 4px;
  span{ flex:1; }
`
const TitleButton = styled.button`
  width:24px;
  svg{ width:8px; height:8px; display:block; margin:0 auto; }
`
const DialogBody = styled.div`
  display:flex;
  gap:6px;
  padding:7px 3px 4px 4px;
  font-family:'Liberation Sans', Arial, sans-serif;
`
const TickSvg = styled.svg`
  width:159px;
  height:173px;
  flex:none;
`
const Form = styled.div`
  flex:1;
  min-width:0;
  display:flex;
  flex-direction:column;
  gap:3px;
`
const Fields = styled.div`
  display:grid;
  grid-template-columns:47px 56px 52px 56px;
  grid-auto-rows:11px;
  column-gap:4px;
  row-gap:3px;
  label{
    text-align:right;
    line-height:11px;
    white-space:nowrap;
  }
`
const fieldBorder = css`
  border:1px solid #a0a0a0;
  background:#fff;
`
const SelectBox = styled.span`
  position:relative;
  ${fieldBorder}
  grid-column:${(p) => (p.$wide ? '2 / -1' : '2 / 3')};
  background:${(p) => (p.$wide ? '#e1e1e1' : '#fff')};
  & + label{ grid-column:1; }
  select{
    appearance:none;
    display:block;
    width:100%;
    height:9px;
    line-height:9px;
    padding-left:1px;
  }
  &::after{
    content:'';
    position:absolute;
    right:3px;
    top:2px;
    width:3px;
    height:3px;
    border:1px solid #555;
    border-width:0 1px 1px 0;
    transform:rotate(45deg);
  }
`
const Spin = styled.span`
  ${fieldBorder}
  display:flex;
  input{
    flex:1;
    min-width:0;
    text-align:right;
    line-height:9px;
    padding-right:3px;
  }
  i{
    flex:none;
    width:8px;
    background:linear-gradient(#333, #333) center / 4px 1px no-repeat #e4e4e4;
    border-left:1px solid #b0b0b0;
  }
`
const Comment = styled.input`
  ${fieldBorder}
  grid-column:2 / -1;
  min-width:0;
`
const Group = styled.fieldset`
  flex:1;
  min-width:0;
  margin:0;
  padding:6px 7px 0 6px;
  border:1px solid #dcdcdc;
  display:flex;
  flex-direction:column;
  gap:4px;
  legend{ padding:0 1px; margin-left:-4px; }
`
const Quote = styled.div`
  font-family:'Noto Sans', sans-serif;
  font-size:14px;
  line-height:20px;
  padding-bottom:4px;
  text-align:center;
`
const DealRow = styled.div`
  display:grid;
  grid-template-columns:1fr 1fr;
  gap:12px;
`
const DealButton = styled.button`
  height:12px;
  background:${(p) => p.$color};
  border:1px solid #b4b4b4;
`
const Warning = styled.p`
  margin:4px -5px 0;
  text-align:center;
  line-height:7px;
`
const ChartTabs = styled.nav`
  height:13px;
  display:flex;
  padding-left:2px;
  border-top:1px solid #9c9c9c;
  border-bottom:1px solid #b0b0b0;
`
const ChartTab = styled.button`
  padding:0 6px;
  color:#606060;
  line-height:10px;
  height:10px;
  background:linear-gradient(#999, #999) right center / 1px 6px no-repeat;
  ${(p) => p.$on && css`
    color:#111;
    background:#fff;
    border:1px solid #222;
    border-top:0;
    padding:0 5px;
  `}
`
const Scroller = styled.div`
  margin-left:auto;
  display:flex;
  gap:8px;
  padding-right:5px;
  font-size:7px;
`
const TerminalPanel = styled.section`
  position:relative;
  display:flex;
  min-height:68px;
  flex:1 0 auto;
`
const Side = styled.aside`
  width:7px;
  background:#dbe4ee;
  display:flex;
  flex-direction:column;
  align-items:center;
  justify-content:space-between;
  padding-bottom:2px;
  button{ font-size:8px; color:#000; }
  span{
    writing-mode:vertical-rl;
    transform:rotate(180deg);
  }
`
const TerminalMain = styled.div`
  flex:1;
  display:flex;
  flex-direction:column;
  justify-content:space-between;
  background:#fff;
  border-left:1px solid #a0a0a0;
`
const Orders = styled.table`
  width:100%;
  table-layout:fixed;
  border-collapse:collapse;
  margin-top:1px;
  th, td{
    padding:0 3px;
    font-weight:400;
    text-align:right;
    white-space:nowrap;
    border-right:1px solid #e4e4e4;
  }
  th{ height:14px; }
  td{ height:10px; border-top:1px solid #eee; }
  th:first-child, td:first-child{ text-align:left; }
  th:last-child{ padding-right:4px; }
  td:last-child{ padding-right:3px; }
`
const Slash = styled.span`
  color:#999;
  margin-left:6px;
`
const RowIcon = styled.svg`
  width:8px;
  height:8px;
  vertical-align:top;
  margin:0 2px 0 -2px;
`
const CloseOrder = styled.button`
  width:8px;
  height:8px;
  margin-left:2px;
  vertical-align:top;
  svg{ width:6px; height:6px; display:block; margin:1px; }
`
const Balance = styled.tr`
  background:#c6c6c6;
  td{ font-weight:700; border:0; }
  td:last-child{ padding-right:13px; }
`
const Totals = styled.div`
  display:flex;
  span + span{ margin-left:5px; }
`
const TerminalTabs = styled.nav`
  height:13px;
  display:flex;
  gap:1px;
  padding-left:2px;
  background:#f0f0f0;
  border-top:1px solid #333;
`
const TermTab = styled.button`
  height:10px;
  padding:0 5px;
  color:#505050;
  white-space:nowrap;
  background:linear-gradient(#999, #999) right center / 1px 6px no-repeat;
  small{
    font-size:5px;
    font-weight:700;
    margin-left:1px;
    color:#e0242c;
    vertical-align:sub;
    line-height:1px;
  }
  ${(p) => p.$on && css`
    color:#111;
    background:#fff;
    border:1px solid #222;
    border-top:0;
  `}
`
const Mark = styled.i`
  position:absolute;
  left:${(p) => p.$left};
  right:${(p) => p.$right};
  top:${(p) => p.$top};
  width:${(p) => p.$width};
  height:${(p) => p.$height};
  border:2px solid #f57cf0;
  pointer-events:none;
`
const Status = styled.footer`
  height:9px;
  display:flex;
  border-top:1px solid #b0b0b0;
`
const StatusCell = styled.span`
  flex:${(p) => (p.$grow ? '1' : 'none')};
  width:${(p) => p.$w};
  padding:1px 0 0 2px;
  line-height:7px;
  white-space:nowrap;
  border-left:${(p) => (p.$grow ? '0' : '1px solid #b4b4b4')};
  svg{ width:13px; height:6px; margin-right:2px; vertical-align:top; }
`
const Bar = styled.footer`
  height:21px;
  display:flex;
  padding-left:1px;
  background:#000;
  color:#fff;
`
const Task = styled.button`
  position:relative;
  width:26px;
  padding:3px 0 1px;
  background:${(p) => (p.$on ? '#333' : 'none')};
  border-bottom:1px solid ${(p) => (p.$open ? '#6ea8d8' : '#000')};
  svg{ width:13px; height:13px; display:block; margin:0 auto; }
`
const Count = styled.b`
  position:absolute;
  right:5px;
  bottom:2px;
  padding:0 1px;
  border-radius:3px;
  background:#e8403c;
  font-size:5px;
  line-height:6px;
`
const Tray = styled.div`
  margin-left:auto;
  display:flex;
  align-items:center;
  gap:3px;
  padding-right:12px;
  svg{ width:10px; height:10px; }
`
const Lang = styled.span`
  width:14px;
  font-size:7px;
  text-align:center;
`
const Clock = styled.time`
  width:34px;
  display:flex;
  flex-direction:column;
  text-align:center;
  line-height:10px;
  margin-right:4px;
`
